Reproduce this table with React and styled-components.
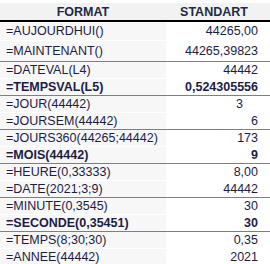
import React from "react";
import styled, { createGlobalStyle } from "styled-components";

const GlobalStyle = createGlobalStyle`
  body {
    margin: 0;
    background: #ffffff;
    font-family: "Liberation Sans", Arial, sans-serif;
  }
`;

const Sheet = styled.div`
  width: 270px;
  height: 264px;
  overflow: hidden;
  padding-top: 3px;
  box-sizing: border-box;
  display: grid;
  grid-template-columns: 166px 1fr;
  align-content: start;
  font-size: 12.5px;
  color: #1c1c48;
`;

const HeadCell = styled.div`
  height: 17px;
  background: #f2f2f2;
  border-bottom: 2px solid #000000;
  display: flex;
  align-items: center;
  justify-content: center;
  padding-right: ${(p) => (p.$right ? "8px" : "0")};
  font-weight: bold;
  color: #1f2a44;
`;

const Cell = styled.div`
  height: ${(p) => p.$h}px;
  display: flex;
  align-items: center;
  white-space: nowrap;
  font-weight: ${(p) => (p.$bold ? "bold" : "normal")};
  border-bottom: 1px solid ${(p) => (p.$line ? "#7f7f7f" : "transparent")};
`;

const FormulaCell = styled(Cell)`
  background: #f7f7f7;
  padding-left: 6px;
  border-bottom-color: ${(p) => (p.$line ? "#7f7f7f" : "#ffffff")};
`;

const ValueCell = styled(Cell)`
  justify-content: flex-end;
  padding-right: ${(p) => p.$pad}px;
`;

const rows = [
  { f: "=AUJOURDHUI()", v: "44265,00", h: 18 },
  { f: "=MAINTENANT()", v: "44265,39823", h: 20, line: true },
  { f: "=DATEVAL(L4)", v: "44442" },
  { f: "=TEMPSVAL(L5)", v: "0,524305556", bold: true, line: true },
  { f: "=JOUR(44442)", v: "3", pad: 27 },
  { f: "=JOURSEM(44442)", v: "6", line: true },
  { f: "=JOURS360(44265;44442)", v: "173" },
  { f: "=MOIS(44442)", v: "9", bold: true, line: true },
  { f: "=HEURE(0,33333)", v: "8,00" },
  { f: "=DATE(2021;3;9)", v: "44442", line: true },
  { f: "=MINUTE(0,3545)", v: "30" },
  { f: "=SECONDE(0,35451)", v: "30", bold: true, line: true },
  { f: "=TEMPS(8;30;30)", v: "0,35" },
  { f: "=ANNEE(44442)", v: "2021", line: true },
];

function App() {
  return (
    <>
      <GlobalStyle />
      <Sheet>
        <HeadCell>FORMAT</HeadCell>
        <HeadCell $right>STANDART</HeadCell>
        {rows.map((r) => (
          <React.Fragment key={r.f}>
            <FormulaCell $h={r.h || 16} $bold={r.bold} $line={r.line}>
              {r.f}
            </FormulaCell>
            <ValueCell
              $h={r.h || 16}
              $bold={r.bold}
              $line={r.line}
              $pad={r.pad || 12}
            >
              {r.v}
            </ValueCell>
          </React.Fragment>
        ))}
      </Sheet>
    </>
  );
}

export default App;
